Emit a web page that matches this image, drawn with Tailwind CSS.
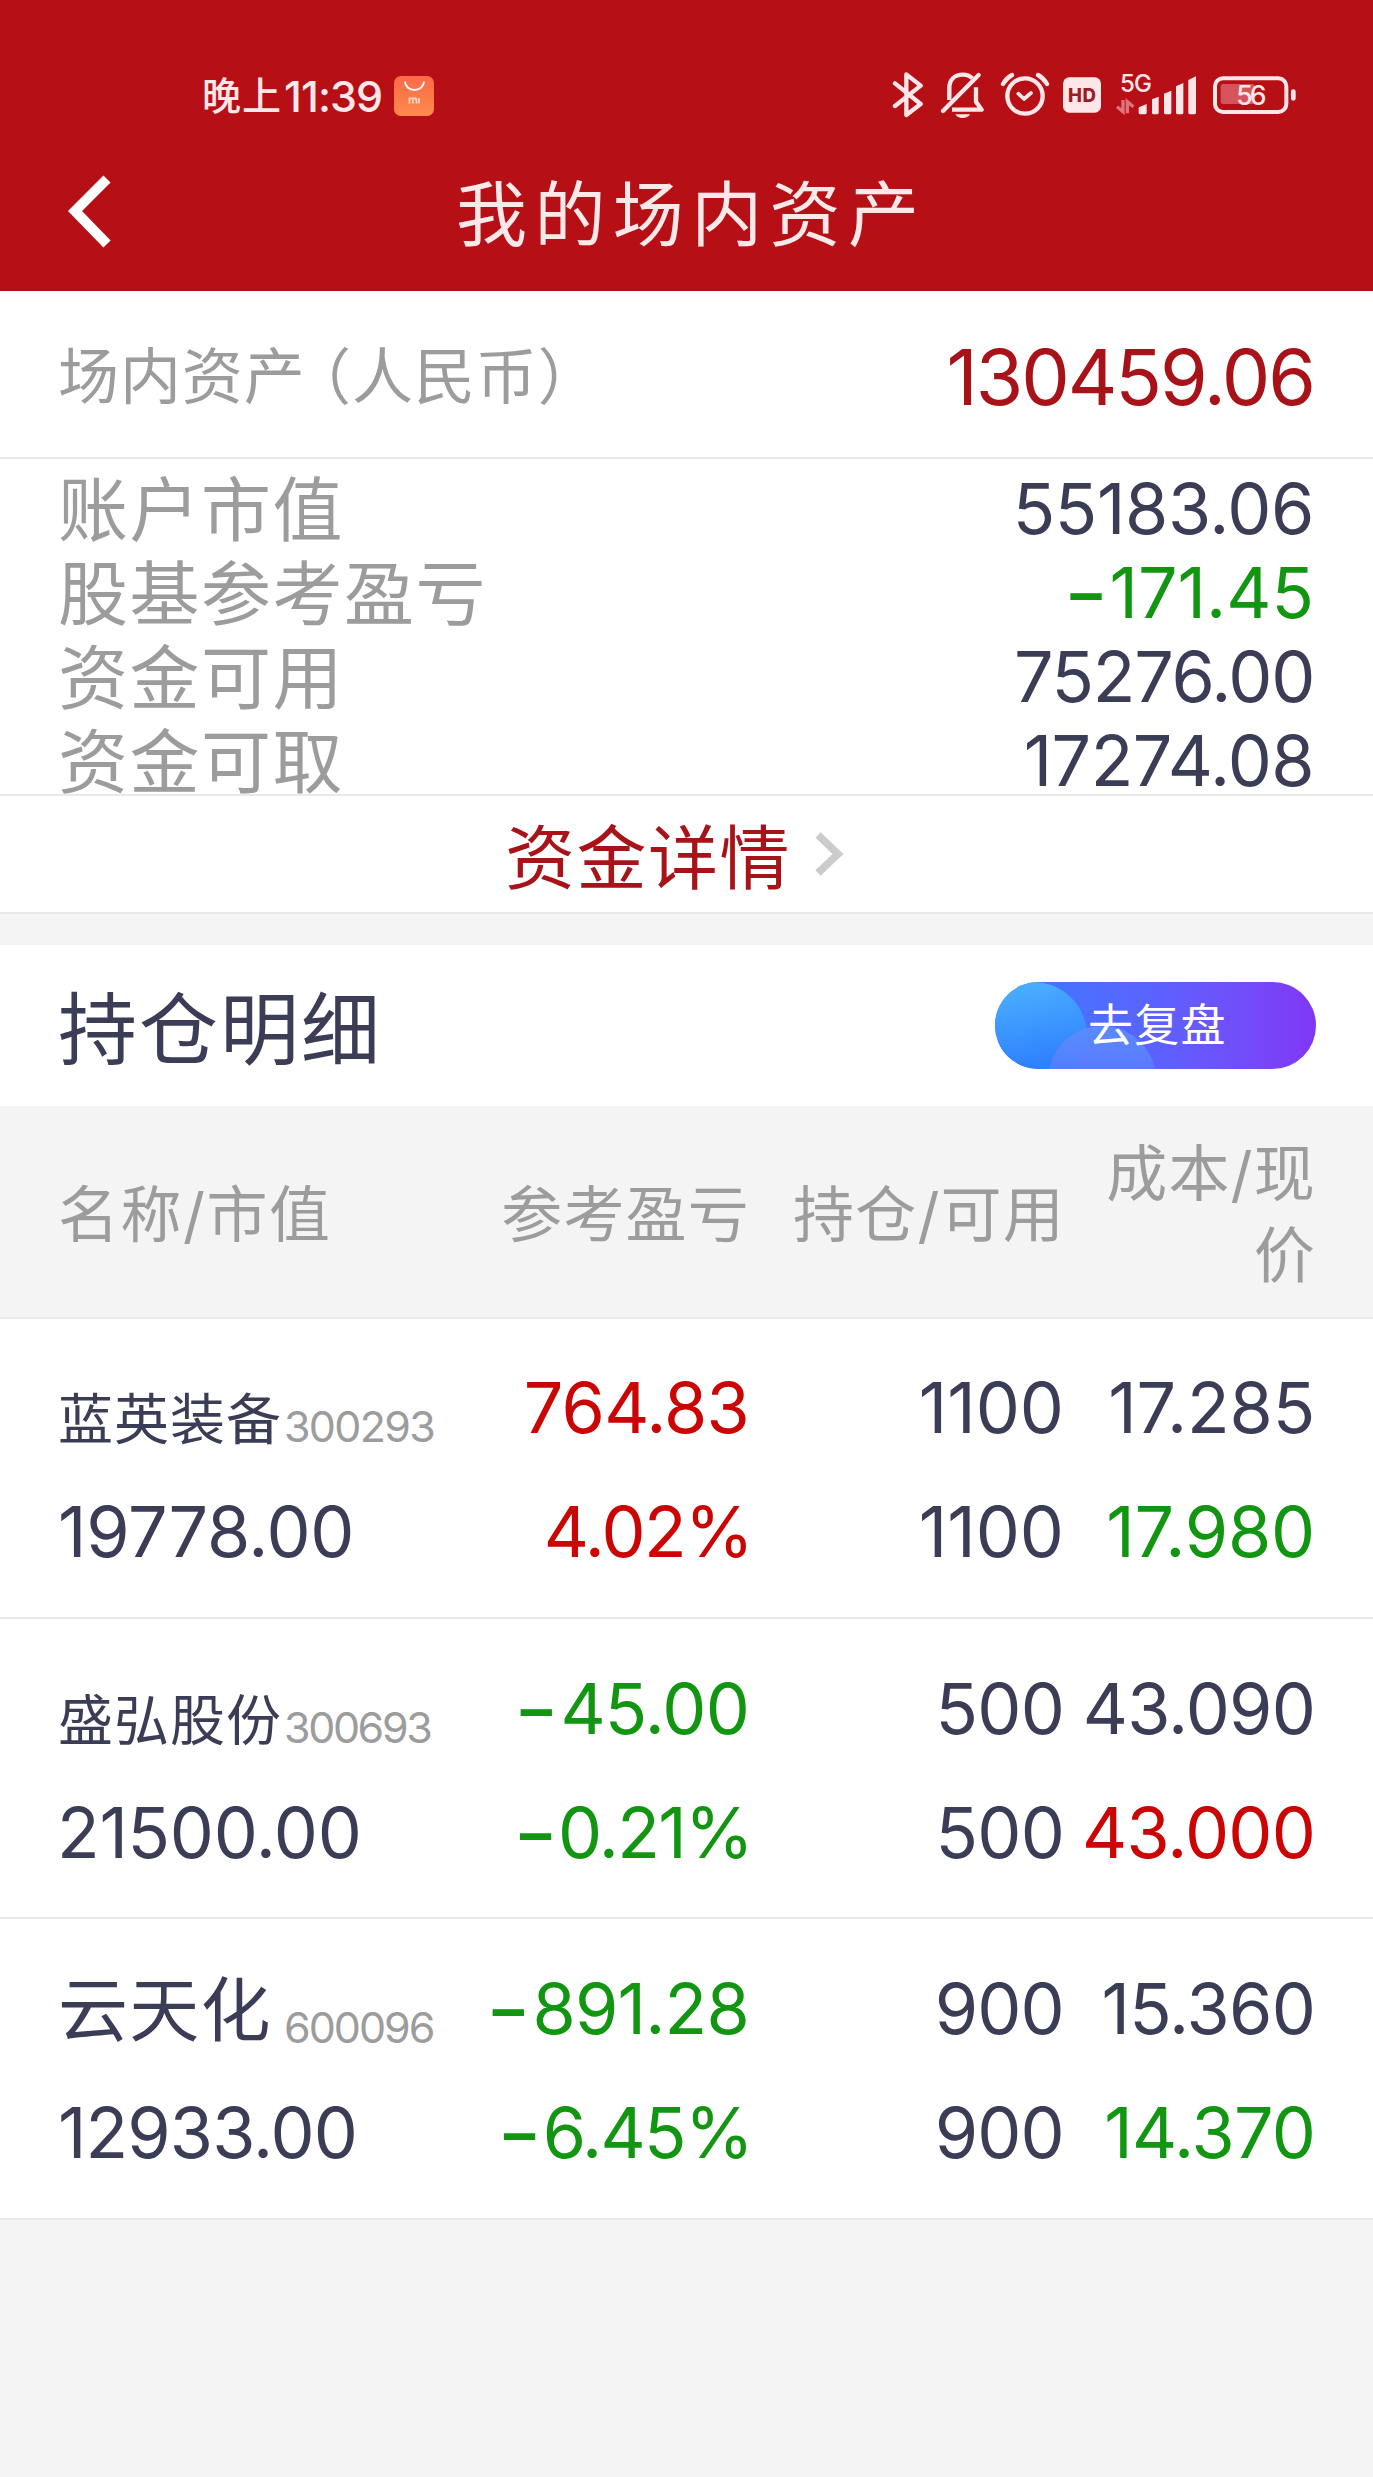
<!DOCTYPE html>
<html lang="zh-CN">
  <head>
    <meta charset="UTF-8" />
    <meta name="viewport" content="width=device-width, initial-scale=1.0" />
    <title>我的场内资产</title>
    <script src="https://cdn.jsdelivr.net/npm/@tailwindcss/browser@4"></script>
  </head>
  <body
    class="w-[1373px] min-h-[2477px] bg-[#f4f4f4] text-[#3a3d55] font-['Inter','Noto_Sans_CJK_SC',sans-serif]"
  >
    <header class="h-[291px] bg-[#b61016] text-[#ffe6e8]">
      <!-- Status bar -->
      <div class="h-[130px] pt-[60px] flex items-start">
        <div class="ml-[202px] h-[72px] flex items-center">
          <span class="w-[82px] text-[39px] font-medium tracking-[1px] whitespace-nowrap">晚上</span>
          <span class="w-[110px] text-[43px] font-medium tracking-[-0.900px] whitespace-nowrap">11:39</span>
          <svg class="w-10 h-10" viewBox="0 0 40 40">
            <defs>
              <linearGradient id="mi" x1="0" y1="0" x2="0" y2="1">
                <stop offset="0" stop-color="#fb6a48" />
                <stop offset="1" stop-color="#ff8a4c" />
              </linearGradient>
            </defs>
            <rect width="40" height="40" rx="7" fill="url(#mi)" />
            <path d="M11 5.500a9.500 8.500 0 0 0 19 0" fill="none" stroke="#fff" stroke-width="1.800" />
            <path d="M15.500 27.500v-5h5.500a1.500 1.500 0 0 1 1.500 1.500v3.500M19 24v3.500M25 22v5.500" fill="none" stroke="#ffd9c4" stroke-width="1.800" />
          </svg>
        </div>
        <div class="ml-[458px] h-[70px] flex">
          <svg class="w-[34px] h-[70px]" viewBox="66 0 102 210" fill="none" stroke="currentColor" stroke-width="13" stroke-linecap="round" stroke-linejoin="round">
            <path d="M75 70L152 132L109 165V43L152 77L75 138" />
          </svg>
          <svg class="w-[60px] h-[70px]" viewBox="168 0 180 210" fill="none" stroke="currentColor" stroke-width="13" stroke-linejoin="round">
            <path d="M238 120V85C238 57 255 44 279 44C291 44 300 48 307 55M318 82V125L335 149H246" />
            <path d="M219 153L326 45" stroke-linecap="round" />
            <path d="M256 163H300C293 178 263 178 256 163Z" fill="currentColor" stroke="none" />
          </svg>
          <svg class="w-[66px] h-[70px]" viewBox="348 0 198 210" fill="none" stroke="currentColor" stroke-width="13">
            <circle cx="465" cy="108" r="53" />
            <path d="M399 72C406 60 415 51 426 45M504 45C515 51 524 60 531 72" stroke-linecap="round" />
            <path d="M445 101L462 117L483 99" stroke-width="11" stroke-linecap="round" stroke-linejoin="round" />
          </svg>
          <svg class="w-[60px] h-[70px]" viewBox="546 0 180 210">
            <rect x="579" y="52" width="114" height="106" rx="19" fill="currentColor" />
            <text x="594" y="126" font-size="56" font-weight="800" fill="#a01a22" textLength="84">HD</text>
          </svg>
          <svg class="w-[91px] h-[70px]" viewBox="66 0 273 210" fill="currentColor">
            <text x="90" y="95" font-size="72" font-weight="500" textLength="96">5G</text>
            <path d="M99 120V155L81 140M112 160V125L130 140" fill="none" stroke="#e0737a" stroke-width="10" />
            <path d="M147 142L170 132V158Q170 163 165 163H151Q146 163 146 158V144ZM186 118L206 110V158Q206 163 201 163H191Q186 163 186 158ZM222 101L244 92V158Q244 163 239 163H227Q222 163 222 158ZM258 79L280 69V158Q280 163 275 163H263Q258 163 258 158ZM295 60L318 49V158Q318 163 313 163H300Q295 163 295 158Z" />
          </svg>
          <svg class="w-[97px] h-[70px]" viewBox="339 0 291 210">
            <rect x="375" y="55" width="214" height="101" rx="24" fill="none" stroke="currentColor" stroke-width="12" />
            <rect x="392" y="72" width="102" height="60" rx="7" fill="#d5535a" />
            <rect x="603" y="88" width="14" height="34" rx="7" fill="currentColor" />
            <text x="439" y="134" font-size="80" font-weight="500" fill="currentColor" textLength="91">56</text>
          </svg>
        </div>
      </div>
      <!-- Nav bar -->
      <div class="h-[161px] flex items-start">
        <svg class="ml-[60px] mt-[41px] w-[60px] h-20" viewBox="0 0 60 80" fill="none" stroke="#fff" stroke-width="10">
          <path d="M47 8L15 40L47 73" />
        </svg>
        <h1 class="ml-[336px] mt-[34px] text-[71px] leading-[100px] tracking-[7.400px] whitespace-nowrap text-[#fbe9ea]">我的场内资产</h1>
      </div>
    </header>

    <!-- Total assets -->
    <section class="h-[168px] bg-white border-b-2 border-[#e9e9e9] flex justify-between pt-[28px] pl-[58px] pr-[59px] leading-[116px]">
      <span class="text-[61px] tracking-[0.900px] text-[#9c9c9c] whitespace-nowrap">场内资产<span class="ml-[15px] [font-feature-settings:'halt']">（</span>人民币<span class="[font-feature-settings:'halt']">）</span></span>
      <span class="text-[77px] tracking-[-2.100px] text-[#a8131a]">130459.06</span>
    </section>

    <section class="h-[337px] bg-white border-b-2 border-[#e9e9e9] pt-[8px] pl-[58px] pr-[59px] text-[70px] leading-[84px]">
      <div class="flex justify-between">
        <span class="translate-y-[2px] text-[70px] tracking-[1.500px] text-[#9c9c9c]">账户市值</span><span class="tracking-[-0.400px]">55183.06</span>
      </div>
      <div class="flex justify-between">
        <span class="translate-y-[2px] text-[70px] tracking-[1.500px] text-[#9c9c9c]">股基参考盈亏</span><span class="text-[#129612]"><span class="inline-block scale-x-140 scale-y-120 mr-[7px]">-</span>171.45</span>
      </div>
      <div class="flex justify-between">
        <span class="translate-y-[2px] text-[70px] tracking-[1.500px] text-[#9c9c9c]">资金可用</span><span class="tracking-[-1.300px]">75276.00</span>
      </div>
      <div class="flex justify-between">
        <span class="translate-y-[2px] text-[70px] tracking-[1.500px] text-[#9c9c9c]">资金可取</span><span class="tracking-[-0.600px]">17274.08</span>
      </div>
    </section>

    <a class="h-[118px] bg-white border-b-2 border-[#e9e9e9] flex items-start pl-[505px]">
      <span class="mt-[13px] text-[70px] leading-[100px] tracking-[1.500px] text-[#a8131a] whitespace-nowrap">资金详情</span>
      <svg class="ml-[21px] mt-[34px] w-[36px] h-[48px]" viewBox="0 0 36 48" fill="none" stroke="#cbcbcd" stroke-width="7.500">
        <path d="M6 5L26 24L6 43" />
      </svg>
    </a>

    <!-- Holdings -->
    <section class="mt-[31px] h-[161px] bg-white flex justify-between items-start pl-[58px] pr-[57px]">
      <h2 class="mt-[30px] text-[79px] leading-[110px] tracking-[2px]">持仓明细</h2>
      <button class="relative overflow-hidden mt-[37px] w-[321px] h-[87px] rounded-full bg-gradient-to-r from-[#2f7cff] via-[#5b62ff] to-[#8036f6]">
        <svg class="absolute inset-0 w-full h-full" viewBox="0 0 321 87">
          <defs>
            <linearGradient id="c1" x1="0" y1="0" x2="0.200" y2="1">
              <stop offset="0" stop-color="#4db4ff" />
              <stop offset="0.850" stop-color="#2f80ff" />
            </linearGradient>
            <linearGradient id="c2" x1="0" y1="0" x2="0" y2="1">
              <stop offset="0" stop-color="#5b8cff" />
              <stop offset="0.500" stop-color="#5b7cff" stop-opacity="0.700" />
            </linearGradient>
          </defs>
          <circle cx="38" cy="54" r="54" fill="url(#c1)" />
          <circle cx="107" cy="98" r="54" fill="url(#c2)" />
        </svg>
        <span class="relative block pl-[93px] text-left text-[45px] leading-[84px] tracking-[1.300px] text-white">去复盘</span>
      </button>
    </section>

    <div class="h-[213px] border-b-2 border-[#e9e9e9] grid grid-cols-[434px_258px_315px_251px] items-center pl-[58px] text-[61px] leading-[82px] tracking-[1.200px] text-[#9c9c9c] text-right">
      <span class="text-left pt-[6px] tracking-[1.500px]">名称/市值</span>
      <span class="pt-[6px] whitespace-nowrap">参考盈亏</span>
      <span class="pt-[6px] whitespace-nowrap">持仓/可用</span>
      <span class="pt-[6px] whitespace-nowrap">成本/现<br />价</span>
    </div>

    <div class="h-[300px] bg-white border-b-2 border-[#e9e9e9] grid grid-cols-[433px_258px_315px_251px] pl-[58px] pt-[27px] text-[70px] leading-[124px] tracking-[-0.800px] text-right">
      <div class="text-left">
        <div class="h-[124px] flex whitespace-nowrap">
          <span class="w-[226px] pt-[11px] text-[55px] tracking-[1px]">蓝英装备</span>
          <span class="pt-[18px] text-[43px] tracking-[-1.700px] text-[#9c9c9c]">300293</span>
        </div>
        <div class="tracking-[-0.300px]">19778.00</div>
      </div>
      <div class="text-[#cb0404]"><div>764.83</div><div class="-mr-[3px] tracking-[-1.700px]">4.02%</div></div>
      <div class="tracking-normal"><div>1100</div><div>1100</div></div>
      <div class="tracking-[-0.200px]"><div>17.285</div><div class="text-[#129612]">17.980</div></div>
    </div>

    <div class="h-[300px] bg-white border-b-2 border-[#e9e9e9] grid grid-cols-[433px_258px_315px_251px] pl-[58px] pt-[28px] text-[70px] leading-[124px] tracking-[-0.800px] text-right">
      <div class="text-left">
        <div class="h-[124px] flex whitespace-nowrap">
          <span class="w-[226px] pt-[11px] text-[55px] tracking-[1px]">盛弘股份</span>
          <span class="pt-[18px] text-[43px] tracking-[-2.400px] text-[#9c9c9c]">300693</span>
        </div>
        <div class="-ml-px tracking-[-0.300px]">21500.00</div>
      </div>
      <div class="text-[#129612]">
        <div><span class="inline-block scale-x-140 scale-y-120 mr-[9px]">-</span>45.00</div>
        <div class="-mr-[3px] tracking-[-1.700px]"><span class="inline-block scale-x-140 scale-y-120 mr-[9px]">-</span>0.21%</div>
      </div>
      <div><div>500</div><div>500</div></div>
      <div><div>43.090</div><div class="text-[#cb0404]">43.000</div></div>
    </div>

    <div class="h-[301px] bg-white border-b-2 border-[#e9e9e9] grid grid-cols-[433px_258px_315px_251px] pl-[58px] pt-[28px] text-[70px] leading-[124px] tracking-[-0.800px] text-right">
      <div class="text-left">
        <div class="h-[124px] flex whitespace-nowrap">
          <span class="w-[226px] pt-[2px] text-[70px] tracking-[1.200px]">云天化</span>
          <span class="pt-[18px] text-[43px] tracking-[-2px] text-[#9c9c9c]">600096</span>
        </div>
        <div class="tracking-[-0.900px]">12933.00</div>
      </div>
      <div class="text-[#129612]">
        <div><span class="inline-block scale-x-140 scale-y-120 mr-[9px]">-</span>891.28</div>
        <div class="-mr-[3px] tracking-[-1.700px]"><span class="inline-block scale-x-140 scale-y-120 mr-[9px]">-</span>6.45%</div>
      </div>
      <div><div>900</div><div>900</div></div>
      <div><div>15.360</div><div class="text-[#129612]">14.370</div></div>
    </div>
  </body>
</html>
